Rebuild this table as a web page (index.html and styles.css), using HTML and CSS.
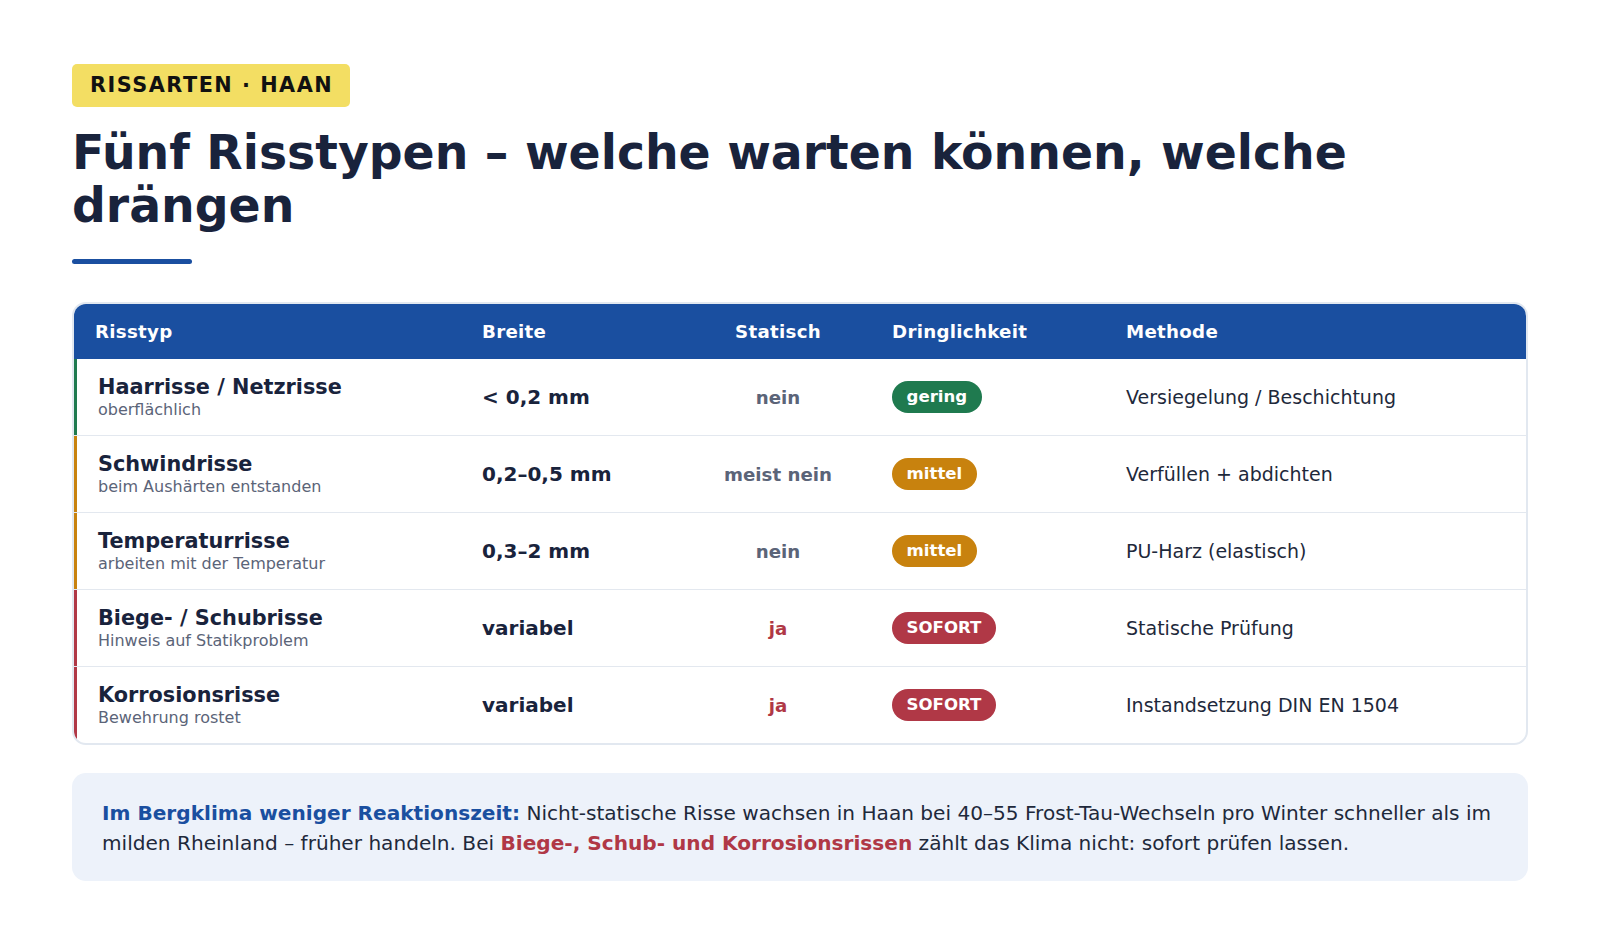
FILE: index.html
```html
<!DOCTYPE html>
<html lang="de">
<head>
<meta charset="utf-8">
<title>Rissarten · Haan</title>
<link rel="stylesheet" href="styles.css">
</head>
<body>
<main class="page">
  <div class="tag">RISSARTEN · HAAN</div>
  <h1 class="title">Fünf Risstypen – welche warten können, welche drängen</h1>
  <div class="rule"></div>

  <div class="table">
    <div class="row head">
      <div class="cell c1">Risstyp</div>
      <div class="cell c2">Breite</div>
      <div class="cell c3">Statisch</div>
      <div class="cell c4">Dringlichkeit</div>
      <div class="cell c5">Methode</div>
    </div>
    <div class="row">
      <div class="cell c1 lvl-green"><div class="name">Haarrisse / Netzrisse</div><div class="sub">oberflächlich</div></div>
      <div class="cell c2 width">&lt; 0,2 mm</div>
      <div class="cell c3 stat">nein</div>
      <div class="cell c4"><span class="pill green">gering</span></div>
      <div class="cell c5 method">Versiegelung / Beschichtung</div>
    </div>
    <div class="row">
      <div class="cell c1 lvl-orange"><div class="name">Schwindrisse</div><div class="sub">beim Aushärten entstanden</div></div>
      <div class="cell c2 width">0,2–0,5 mm</div>
      <div class="cell c3 stat">meist nein</div>
      <div class="cell c4"><span class="pill orange">mittel</span></div>
      <div class="cell c5 method">Verfüllen + abdichten</div>
    </div>
    <div class="row">
      <div class="cell c1 lvl-orange"><div class="name">Temperaturrisse</div><div class="sub">arbeiten mit der Temperatur</div></div>
      <div class="cell c2 width">0,3–2 mm</div>
      <div class="cell c3 stat">nein</div>
      <div class="cell c4"><span class="pill orange">mittel</span></div>
      <div class="cell c5 method">PU-Harz (elastisch)</div>
    </div>
    <div class="row">
      <div class="cell c1 lvl-red"><div class="name">Biege- / Schubrisse</div><div class="sub">Hinweis auf Statikproblem</div></div>
      <div class="cell c2 width">variabel</div>
      <div class="cell c3 stat yes">ja</div>
      <div class="cell c4"><span class="pill red">SOFORT</span></div>
      <div class="cell c5 method">Statische Prüfung</div>
    </div>
    <div class="row last">
      <div class="cell c1 lvl-red"><div class="name">Korrosionsrisse</div><div class="sub">Bewehrung rostet</div></div>
      <div class="cell c2 width">variabel</div>
      <div class="cell c3 stat yes">ja</div>
      <div class="cell c4"><span class="pill red">SOFORT</span></div>
      <div class="cell c5 method">Instandsetzung DIN EN 1504</div>
    </div>
  </div>

  <p class="note"><strong class="blue">Im Bergklima weniger Reaktionszeit:</strong> Nicht-statische Risse wachsen in Haan bei 40–55 Frost-Tau-Wechseln pro Winter schneller als im milden Rheinland – früher handeln. Bei <strong class="redtxt">Biege-, Schub- und Korrosionsrissen</strong> zählt das Klima nicht: sofort prüfen lassen.</p>
</main>
</body>
</html>
```

FILE: styles.css
```css
* { box-sizing: border-box; }
html, body { margin: 0; padding: 0; background: #ffffff; }
body {
  font-family: "DejaVu Sans", Verdana, sans-serif;
  color: #19233c;
}
.page {
  padding: 64px 72px 40px;
}
.tag {
  display: inline-block;
  background: #f3de63;
  color: #111111;
  font-weight: bold;
  font-size: 20.8px;
  letter-spacing: 1.5px;
  line-height: 25px;
  padding: 9px 17px 9px 18px;
  border-radius: 5px;
}
.title {
  margin: 19px 0 0;
  font-size: 47.3px;
  line-height: 53px;
  font-weight: bold;
  color: #19233c;
  max-width: 1300px;
}
.rule {
  width: 120px;
  height: 5px;
  border-radius: 3px;
  background: #1a4fa0;
  margin-top: 27px;
}
.table {
  margin-top: 38px;
  border: 2px solid #e2e8f0;
  border-radius: 14px;
  overflow: hidden;
}
.row {
  display: grid;
  grid-template-columns: 387px 224px 186px 234px 421px;
  border-bottom: 1px solid #e3e8ef;
}
.row.last { border-bottom: none; }
.row.head {
  background: #1a4fa0;
  color: #ffffff;
  font-weight: bold;
  font-size: 18.2px;
  letter-spacing: 0.3px;
  line-height: 24px;
  border-bottom: none;
}
.row.head .cell { padding-top: 15.5px; padding-bottom: 15.5px; }
.cell {
  padding: 15.5px 21px;
  display: flex;
  flex-direction: column;
  justify-content: center;
  min-width: 0;
}
.c3 { text-align: center; align-items: center; }
.lvl-green { border-left: 3px solid #1f7a4f; }
.lvl-orange { border-left: 3px solid #c8820e; }
.lvl-red { border-left: 3px solid #b03846; }
.name {
  font-weight: bold;
  font-size: 20.8px;
  line-height: 25px;
  color: #19233c;
}
.sub {
  font-size: 16px;
  line-height: 20px;
  color: #5b6478;
}
.width {
  font-weight: bold;
  font-size: 20px;
  color: #19233c;
}
.stat {
  font-weight: bold;
  font-size: 18.2px;
  color: #5b6478;
}
.stat.yes { color: #b03846; }
.c4 { align-items: flex-start; }
.pill {
  display: inline-block;
  color: #ffffff;
  font-weight: bold;
  font-size: 16.6px;
  line-height: 22px;
  padding: 5px 14.5px;
  border-radius: 16px;
}
.pill.green { background: #1f7a4f; }
.pill.orange { background: #c8820e; }
.pill.red { background: #b03846; }
.method {
  font-size: 19px;
  color: #1e293b;
}
.note {
  margin: 28px 0 0;
  background: #edf2fa;
  border-radius: 14px;
  padding: 25px 30px 23px;
  font-size: 20.1px;
  line-height: 30px;
  color: #1e293b;
}
.blue { color: #1a4fa0; }
.redtxt { color: #b03846; }
```
